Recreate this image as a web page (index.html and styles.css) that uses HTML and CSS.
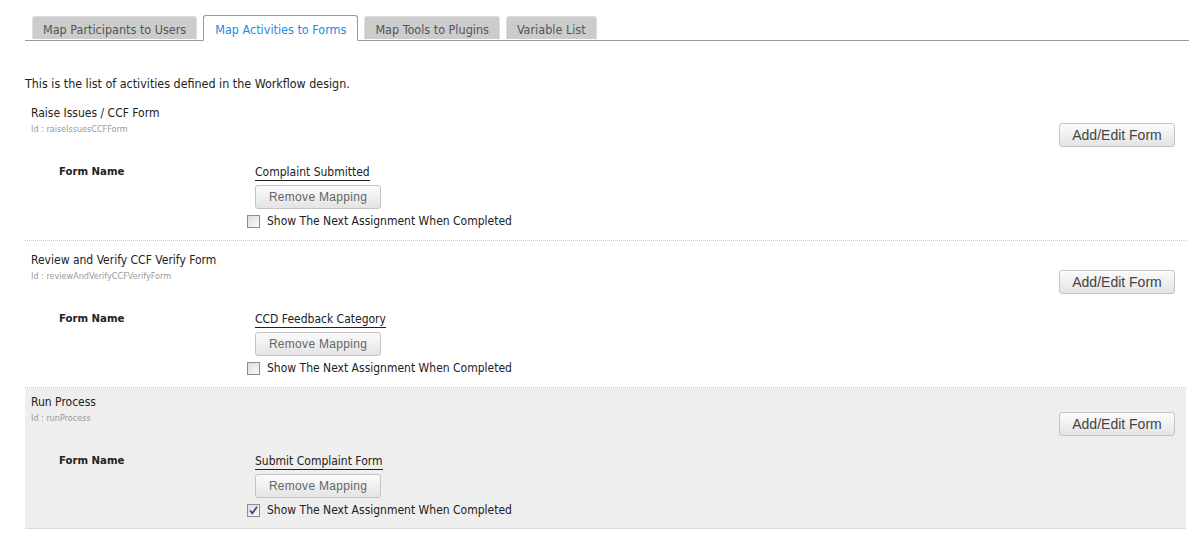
FILE: index.html
```html
<!DOCTYPE html>
<html lang="en">
<head>
    <meta charset="UTF-8">
    <title>Map Activities to Forms</title>
    <link rel="stylesheet" href="styles.css">
</head>
<body>

<div class="tabs">
    <ul>
        <li><a href="#">Map Participants to Users</a></li>
        <li class="active"><a href="#">Map Activities to Forms</a></li>
        <li><a href="#">Map Tools to Plugins</a></li>
        <li><a href="#">Variable List</a></li>
    </ul>
</div>

<div class="panel">
    <p class="intro">This is the list of activities defined in the Workflow design.</p>

    <div class="activity">
        <div class="activity-head">
            <div>
                <div class="activity-name">Raise Issues / CCF Form</div>
                <div class="activity-id">Id : raiseIssuesCCFForm</div>
            </div>
            <button class="btn btn-edit">Add/Edit Form</button>
        </div>
        <div class="mapping">
            <div class="label">Form Name</div>
            <div class="value">
                <a href="#" class="form-link">Complaint Submitted</a>
                <button class="btn btn-remove">Remove Mapping</button>
                <label class="check"><span class="box"></span>Show The Next Assignment When Completed</label>
            </div>
        </div>
    </div>

    <div class="activity">
        <div class="activity-head">
            <div>
                <div class="activity-name">Review and Verify CCF Verify Form</div>
                <div class="activity-id">Id : reviewAndVerifyCCFVerifyForm</div>
            </div>
            <button class="btn btn-edit">Add/Edit Form</button>
        </div>
        <div class="mapping">
            <div class="label">Form Name</div>
            <div class="value">
                <a href="#" class="form-link">CCD Feedback Category</a>
                <button class="btn btn-remove">Remove Mapping</button>
                <label class="check"><span class="box"></span>Show The Next Assignment When Completed</label>
            </div>
        </div>
    </div>

    <div class="activity selected">
        <div class="activity-head">
            <div>
                <div class="activity-name">Run Process</div>
                <div class="activity-id">Id : runProcess</div>
            </div>
            <button class="btn btn-edit">Add/Edit Form</button>
        </div>
        <div class="mapping">
            <div class="label">Form Name</div>
            <div class="value">
                <a href="#" class="form-link">Submit Complaint Form</a>
                <button class="btn btn-remove">Remove Mapping</button>
                <label class="check"><span class="box"><svg width="11" height="11" viewBox="0 0 11 11"><path d="M2 5.5 L4.3 8.3 L9 1.8" fill="none" stroke="#3b4a8c" stroke-width="1.8"/></svg></span>Show The Next Assignment When Completed</label>
            </div>
        </div>
    </div>
</div>

</body>
</html>
```

FILE: styles.css
```css
body { font-family: "DejaVu Sans Condensed", "DejaVu Sans", sans-serif; font-size: 11px; color: #222; margin: 0; background: #fff; }
button { font-family: "Liberation Sans", Arial, sans-serif; }

.tabs { margin: 15px 11px 0 25px; border-bottom: 1px solid #999; padding-left: 7px; }
.tabs ul { list-style: none; margin: 0; padding: 0; display: flex; gap: 6px; }
.tabs li { margin-bottom: -1px; }
.tabs a { display: block; height: 22px; line-height: 25px; padding: 0 10px; margin-top: 1px; background: #ccc; border: 1px solid #ddd; border-bottom: none; border-radius: 3px 3px 0 0; color: #555; text-decoration: none; font-size: 12.5px; }
.tabs li.active a { background: #fff; color: #1e8ae6; border: 1px solid #999; border-bottom: 1px solid #fff; height: 24px; margin-top: 0; line-height: 27px; padding: 0 11px; }

.panel { margin: 0 14px 0 25px; }
.intro { margin: 0; padding-top: 36px; height: 17px; line-height: 14px; font-size: 12.4px; }

.activity { padding: 11px 11px 11px 6px; border-bottom: 1px dotted #c8c8c8; }
.activity.selected { background: #eee; padding-top: 6px; padding-bottom: 10px; }
.activity-head { display: flex; justify-content: space-between; align-items: flex-start; }
.activity-name { font-size: 12px; line-height: 16px; }
.activity-id { font-size: 9px; line-height: 13px; margin-top: 2px; color: #999; }

.btn { background: linear-gradient(#fbfbfb, #e4e4e4); border: 1px solid #c4c4c4; border-radius: 3px; color: #555; cursor: pointer; }
.btn-edit { margin-top: 18px; height: 24px; width: 116px; font-size: 14px; color: #444; }
.btn-remove { display: block; margin: 5px 0 4px; height: 24px; width: 126px; font-size: 12px; color: #666; letter-spacing: 0.3px; }

.mapping { display: flex; margin-top: 17px; }
.mapping .label { width: 196px; padding-left: 28px; font-weight: bold; line-height: 16px; font-size: 11.3px; }
.mapping .value { line-height: 16px; font-size: 12px; }
.form-link { color: #222; text-decoration: none; border-bottom: 1px solid #222; padding-bottom: 1px; }

.check { display: flex; align-items: center; margin-left: -8px; }
.box { width: 11px; height: 11px; border: 1px solid #8c8c8c; background: linear-gradient(135deg, #ddd, #fafafa); margin-right: 7px; display: flex; align-items: center; justify-content: center; }
```
